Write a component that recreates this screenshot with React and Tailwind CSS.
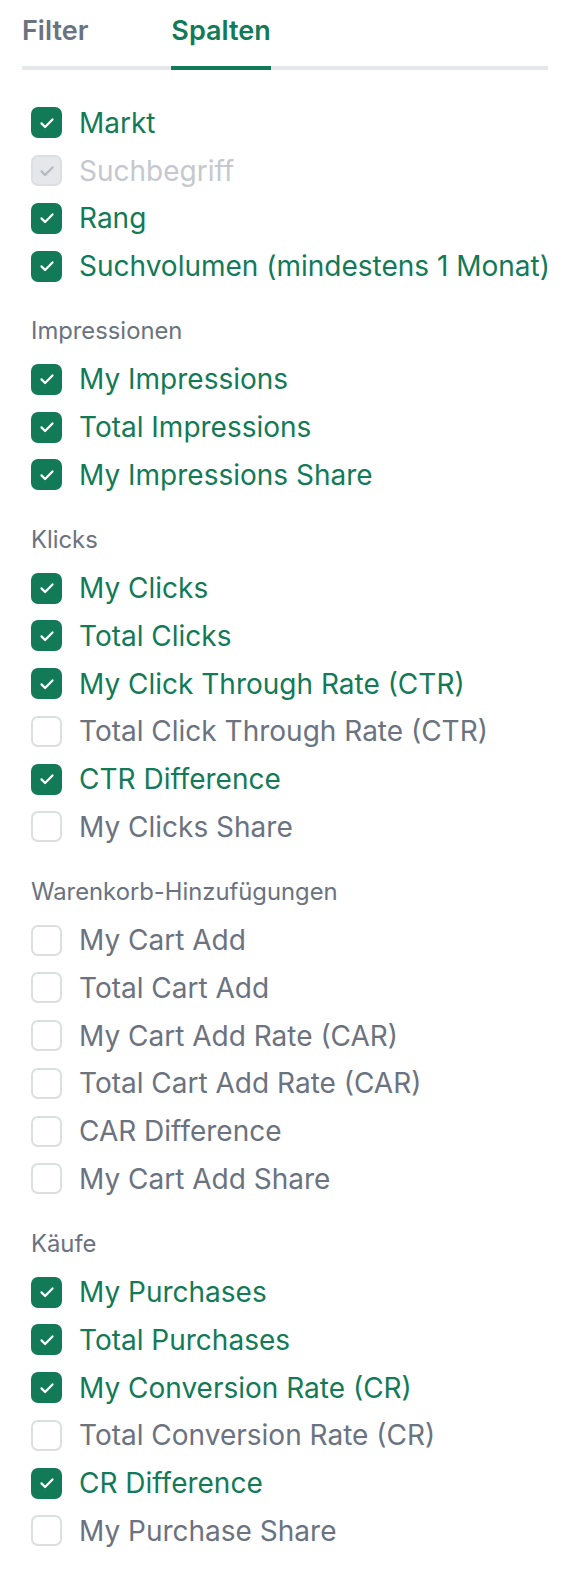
import React from "react";

const sections = [
  {
    title: null,
    items: [
      ["Markt", 1],
      ["Suchbegriff", 2],
      ["Rang", 1],
      ["Suchvolumen (mindestens 1 Monat)", 1],
    ],
  },
  {
    title: "Impressionen",
    items: [
      ["My Impressions", 1],
      ["Total Impressions", 1],
      ["My Impressions Share", 1],
    ],
  },
  {
    title: "Klicks",
    items: [
      ["My Clicks", 1],
      ["Total Clicks", 1],
      ["My Click Through Rate (CTR)", 1],
      ["Total Click Through Rate (CTR)", 0],
      ["CTR Difference", 1],
      ["My Clicks Share", 0],
    ],
  },
  {
    title: "Warenkorb-Hinzufügungen",
    items: [
      ["My Cart Add", 0],
      ["Total Cart Add", 0],
      ["My Cart Add Rate (CAR)", 0],
      ["Total Cart Add Rate (CAR)", 0],
      ["CAR Difference", 0],
      ["My Cart Add Share", 0],
    ],
  },
  {
    title: "Käufe",
    items: [
      ["My Purchases", 1],
      ["Total Purchases", 1],
      ["My Conversion Rate (CR)", 1],
      ["Total Conversion Rate (CR)", 0],
      ["CR Difference", 1],
      ["My Purchase Share", 0],
    ],
  },
];

function Check({ color }) {
  return (
    <svg width="20" height="20" viewBox="0 0 20 20" fill="none">
      <path d="M4.5 10.4l3.6 3.6 7.4-7.6" stroke={color} strokeWidth="2.2" strokeLinecap="round" strokeLinejoin="round" />
    </svg>
  );
}

function Row({ label, state }) {
  if (state === 1) {
    return (
      <div className="flex items-center h-[47.75px]">
        <div className="w-[31px] h-[31px] shrink-0 rounded-[7px] bg-[#137a57] flex items-center justify-center">
          <Check color="#ffffff" />
        </div>
        <span className="ml-[17px] text-[28px] leading-[34px] text-[#137a57] whitespace-nowrap">{label}</span>
      </div>
    );
  }
  if (state === 2) {
    return (
      <div className="flex items-center h-[47.75px]">
        <div className="w-[31px] h-[31px] shrink-0 rounded-[7px] bg-[#e5e7eb] border-[2px] border-[#dcdee2] flex items-center justify-center">
          <Check color="#b5b9c0" />
        </div>
        <span className="ml-[17px] text-[28px] leading-[34px] text-[#c5c8ce] whitespace-nowrap">{label}</span>
      </div>
    );
  }
  return (
    <div className="flex items-center h-[47.75px]">
      <div className="w-[31px] h-[31px] shrink-0 rounded-[7px] bg-white border-[2px] border-[#dcdee2]" />
      <span className="ml-[17px] text-[28px] leading-[34px] text-[#6b7280] whitespace-nowrap">{label}</span>
    </div>
  );
}

export default function App() {
  return (
    <div className="w-[572px] h-[1584px] bg-white pl-[22px] pr-[24px]" style={{ fontFamily: "Inter, 'Noto Sans', sans-serif" }}>
      <div className="flex border-b-[4px] border-[#e5e7eb] h-[70px]">
        <div className="text-[27px] font-semibold text-[#6b7280] pt-[11px]">Filter</div>
        <div className="ml-[83px] text-[27px] font-semibold text-[#137a57] pt-[11px] border-b-[4px] border-[#137a57] mb-[-4px]">Spalten</div>
      </div>
      <div className="pl-[9px] pt-[29px] flex flex-col gap-[16.5px]">
        {sections.map((s, i) => (
          <div key={i} className="flex flex-col">
            {s.title && (
              <div className="h-[49px] flex items-center text-[23.8px] text-[#6b7280]">{s.title}</div>
            )}
            {s.items.map(([l, st]) => (
              <Row key={l} label={l} state={st} />
            ))}
          </div>
        ))}
      </div>
    </div>
  );
}
